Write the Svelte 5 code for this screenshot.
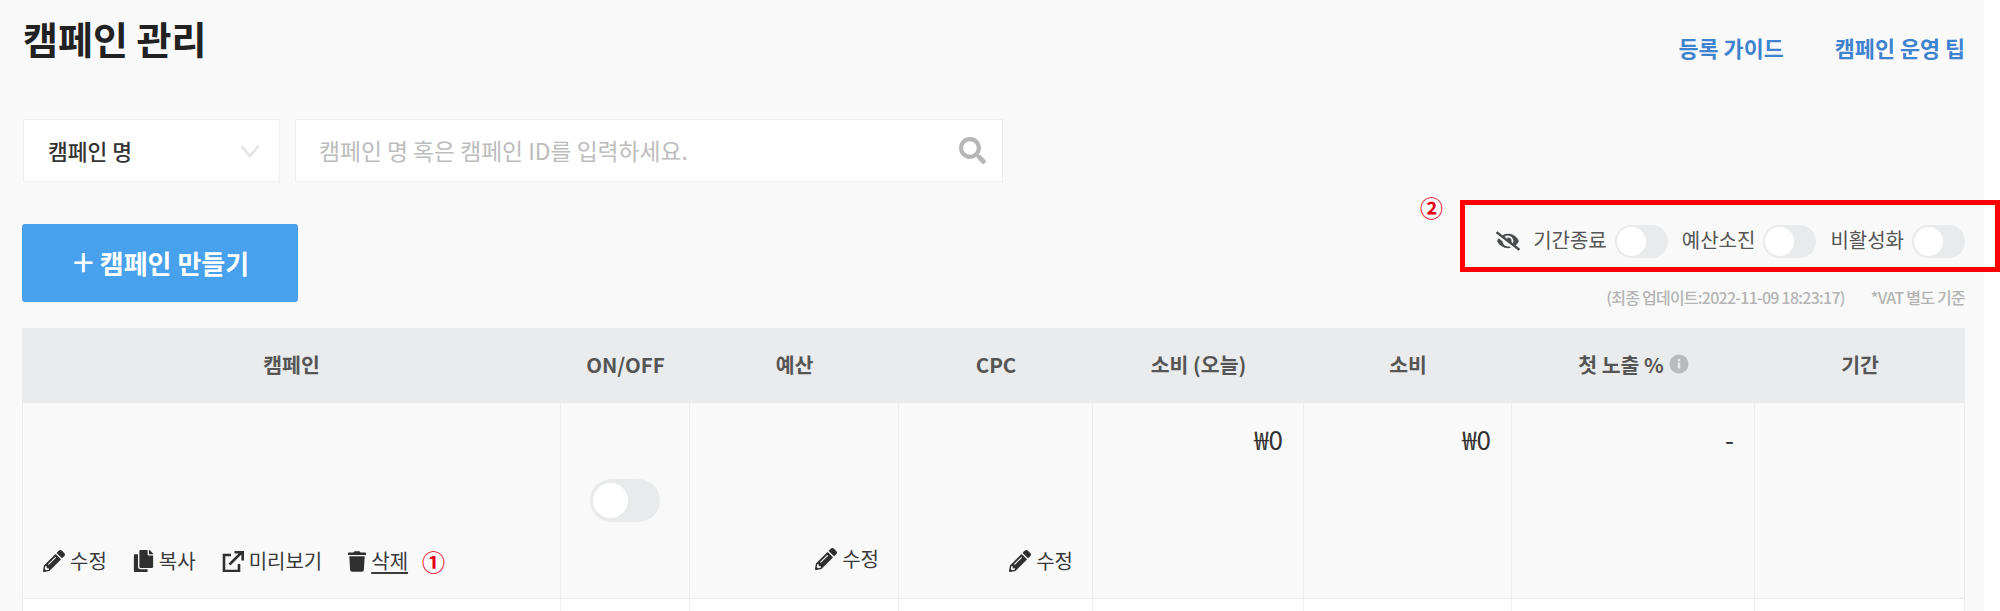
<script>
  const icons = {
    pencil: { vb: '0 0 512 512', d: 'M497.9 142.1l-46.1 46.1c-4.7 4.7-12.3 4.7-17 0l-111-111c-4.7-4.7-4.7-12.3 0-17l46.1-46.1c18.7-18.7 49.1-18.7 67.9 0l60.1 60.1c18.8 18.7 18.8 49.1 0 67.9zM284.2 99.8L21.6 362.4.4 483.9c-2.9 16.4 11.4 30.6 27.8 27.8l121.5-21.3 262.6-262.6c4.7-4.7 4.7-12.3 0-17l-111-111c-4.8-4.7-12.4-4.7-17.1 0zM124.1 339.9c-5.5-5.5-5.5-14.3 0-19.8l154-154c5.5-5.5 14.3-5.5 19.8 0s5.5 14.3 0 19.8l-154 154c-5.5 5.5-14.3 5.5-19.8 0zM88 424h48v36.3l-64.5 11.3-31.1-31.1L51.7 376H88v48z' },
    copy: { vb: '0 0 448 512', d: 'M320 448v40c0 13.255-10.745 24-24 24H24c-13.255 0-24-10.745-24-24V120c0-13.255 10.745-24 24-24h72v296c0 30.879 25.121 56 56 56h168zm0-344V0H152c-13.255 0-24 10.745-24 24v368c0 13.255 10.745 24 24 24h272c13.255 0 24-10.745 24-24V128H344c-13.2 0-24-10.8-24-24zm120.971-31.029L375.029 7.029A24 24 0 0 0 358.059 0H352v96h96v-6.059a24 24 0 0 0-7.029-16.97z' },
    trash: { vb: '0 0 448 512', d: 'M432 32H312l-9.4-18.7A24 24 0 0 0 281.1 0H166.8a23.72 23.72 0 0 0-21.4 13.3L136 32H16A16 16 0 0 0 0 48v32a16 16 0 0 0 16 16h416a16 16 0 0 0 16-16V48a16 16 0 0 0-16-16zM53.2 467a48 48 0 0 0 47.9 45h245.8a48 48 0 0 0 47.9-45L416 128H32z' }
  };
  const columns = [
    { label: '캠페인', width: 539 },
    { label: 'ON/OFF', width: 129 },
    { label: '예산', width: 209 },
    { label: 'CPC', width: 194 },
    { label: '소비 (오늘)', width: 211 },
    { label: '소비', width: 208 },
    { label: '첫 노출 %', width: 243, info: true },
    { label: '기간', width: 210 }
  ];
  const filters = ['기간종료', '예산소진', '비활성화'];
  const gridColumns = columns.map((c) => c.width + 'px').join(' ');
</script>

{#snippet icon(name, cls)}
  <svg class={cls} viewBox={icons[name].vb} aria-hidden="true"><path d={icons[name].d} fill="currentColor" /></svg>
{/snippet}

<div class="shot">
  <main class="page">
    <header class="top">
      <h1>캠페인 관리</h1>
      <nav>
        <a href="#guide">등록 가이드</a>
        <a href="#tip">캠페인 운영 팁</a>
      </nav>
    </header>

    <section class="search">
      <div class="select">
        <span>캠페인 명</span>
        <svg class="chev" viewBox="0 0 20 14" aria-hidden="true"><path d="M1.5 2 10 12 18.500 2" fill="none" stroke="#e4e4e4" stroke-width="2.500" /></svg>
      </div>
      <div class="input">
        <span>캠페인 명 혹은 캠페인 ID를 입력하세요.</span>
        <svg class="mag" viewBox="0 0 512 512" aria-hidden="true"><path fill="currentColor" d="M505 442.7L405.3 343c-4.5-4.5-10.6-7-17-7H372c27.6-35.3 44-79.7 44-128C416 93.1 322.9 0 208 0S0 93.1 0 208s93.1 208 208 208c48.3 0 92.7-16.4 128-44v16.3c0 6.4 2.5 12.5 7 17l99.700 99.700c9.400 9.400 24.600 9.400 33.900 0l28.300-28.300c9.400-9.400 9.400-24.600.1-34zM208 336c-70.700 0-128-57.200-128-128 0-70.700 57.200-128 128-128 70.700 0 128 57.200 128 128 0 70.700-57.200 128-128 128z" /></svg>
      </div>
    </section>

    <section class="bar">
      <button class="create"><span class="plus">+</span> 캠페인 만들기</button>
      <div class="side">
        <div class="filters">
          <svg class="eye" viewBox="0 0 640 512" aria-hidden="true"><path fill="currentColor" d="M320 400c-75.850 0-137.250-58.710-142.900-133.110L72.200 185.820c-13.790 17.300-26.480 35.590-36.720 55.590a32.350 32.350 0 0 0 0 29.190C89.710 376.410 197.070 448 320 448c26.910 0 52.870-4 77.890-10.460L346 397.390a144.130 144.130 0 0 1-26 2.610zm313.820 58.100l-110.550-85.440a331.250 331.250 0 0 0 81.250-102.070 32.350 32.350 0 0 0 0-29.190C550.290 135.590 442.930 64 320 64a308.150 308.150 0 0 0-147.320 37.700L45.460 3.370A16 16 0 0 0 23 6.180L3.370 31.450A16 16 0 0 0 6.180 53.900l588.360 454.730a16 16 0 0 0 22.460-2.810l19.640-25.270a16 16 0 0 0-2.820-22.450zm-183.720-142l-39.300-30.380A94.750 94.750 0 0 0 416 256a94.760 94.760 0 0 0-121.310-92.210A47.650 47.650 0 0 1 304 192a46.640 46.640 0 0 1-1.540 10l-73.610-56.890A142.310 142.310 0 0 1 320 112a143.920 143.920 0 0 1 144 144c0 21.630-5.290 41.790-13.900 60.110z" /></svg>
          {#each filters as f}
            <span class="flabel">{f}</span>
            <span class="switch small"><i></i></span>
          {/each}
        </div>
        <div class="meta">
          <span>(최종 업데이트:2022-11-09 18:23:17)</span>
          <span>*VAT 별도 기준</span>
        </div>
      </div>
    </section>

    <section class="table" style="grid-template-columns: {gridColumns}">
      {#each columns as c}
        <div class="th">
          {c.label}
          {#if c.info}
            <svg class="info" viewBox="0 0 20 20" aria-hidden="true"><circle cx="10" cy="10" r="9.500" fill="#b9bcbe" /><rect x="8.800" y="8.500" width="2.400" height="6" fill="#e9ebec" /><rect x="8.800" y="5" width="2.400" height="2.300" fill="#e9ebec" /></svg>
          {/if}
        </div>
      {/each}

      <div class="td first actions">
        <span class="act">{@render icon('pencil', 'ic pencil')}수정</span>
        <span class="act">{@render icon('copy', 'ic copy')}복사</span>
        <span class="act">
          <svg class="ic ext" viewBox="0 0 22 21" aria-hidden="true"><path d="M9 4H2v16h15v-7" fill="none" stroke="currentColor" stroke-width="2.600" /><path d="M7.500 13.500 19 2M12.500 1.300H20.700V9.500" fill="none" stroke="currentColor" stroke-width="2.600" /></svg>
          미리보기
        </span>
        <span class="act">{@render icon('trash', 'ic trash')}<u>삭제</u></span>
        <span class="mark">①</span>
      </div>
      <div class="td center"><span class="switch large"><i></i></span></div>
      <div class="td end edit up"><span class="act">{@render icon('pencil', 'ic pencil')}수정</span></div>
      <div class="td end edit"><span class="act">{@render icon('pencil', 'ic pencil')}수정</span></div>
      <div class="td num">₩0</div>
      <div class="td num">₩0</div>
      <div class="td num">-</div>
      <div class="td last"></div>

      {#each columns as c, i}
        <div class="td blank" class:first={i === 0} class:last={i === columns.length - 1}></div>
      {/each}
    </section>
  </main>

  <div class="callout" aria-hidden="true"></div>
  <span class="mark two">②</span>
</div>

<style>
  :global(body) {
    background: #fff;
    margin: 0;
  }
  .shot {
    position: relative;
    width: 2000px;
    height: 611px;
    overflow: hidden;
    font-family: "Noto Sans CJK KR", "Noto Sans", sans-serif;
    color: #333;
  }
  .page {
    box-sizing: border-box;
    width: 1984px;
    height: 611px;
    padding: 0 19px 0 22px;
    background: #f9f9f9;
    overflow: hidden;
  }
  .top {
    display: flex;
    justify-content: space-between;
    align-items: flex-start;
    height: 119px;
  }
  h1 {
    margin: 10px 0 0 1px;
    font-size: 38px;
    line-height: 56px;
    font-weight: 700;
    color: #222;
  }
  nav {
    display: flex;
    gap: 51px;
    margin-top: 32px;
  }
  nav a {
    color: #3d83cf;
    font-size: 21.800px;
    line-height: 32px;
    font-weight: 700;
    text-decoration: none;
  }
  .search {
    display: flex;
    gap: 15px;
    height: 63px;
    margin-left: 1px;
  }
  .select,
  .input {
    box-sizing: border-box;
    display: flex;
    align-items: center;
    justify-content: space-between;
    background: #fff;
    border: 1px solid #eeeeee;
    height: 63px;
  }
  .select {
    width: 257px;
    padding: 0 19px 0 24px;
    font-size: 21.500px;
    font-weight: 500;
    color: #333;
  }
  .chev {
    width: 20px;
    height: 14px;
  }
  .input {
    width: 708px;
    padding: 0 16px 0 23px;
    font-size: 22.800px;
    color: #bcbcbc;
  }
  .mag {
    width: 27px;
    height: 27px;
    color: #b6b6b6;
  }
  .bar {
    display: flex;
    justify-content: space-between;
    align-items: flex-start;
    height: 146px;
    padding-top: 42px;
    box-sizing: border-box;
  }
  .create {
    width: 276px;
    height: 78px;
    border: 0;
    border-radius: 3px;
    background: #47a1ec;
    color: #fff;
    font: inherit;
    font-size: 26px;
    font-weight: 700;
    padding: 0 0 0 2px;
    line-height: 72px;
  }
  .plus {
    font-size: 38px;
    font-weight: 400;
    line-height: 1;
    vertical-align: -3px;
  }
  .side {
    display: flex;
    flex-direction: column;
    align-items: flex-end;
  }
  .filters {
    display: flex;
    align-items: center;
    height: 34px;
  }
  .eye {
    width: 24px;
    height: 20px;
    margin-right: 13px;
    color: #4a4d4e;
  }
  .flabel {
    font-size: 20px;
    line-height: 30px;
    color: #555;
    margin-right: 8px;
    padding-bottom: 2px;
  }
  .switch {
    display: block;
    box-sizing: border-box;
    background: #e8eaeb;
    position: relative;
  }
  .switch i {
    display: block;
    background: #fff;
    border-radius: 50%;
  }
  .switch.small {
    width: 53px;
    height: 33px;
    border-radius: 17px;
    padding: 2px;
  }
  .switch.small:not(:last-child) {
    margin-right: 14px;
  }
  .switch.small i {
    width: 29px;
    height: 29px;
  }
  .switch.large {
    width: 70px;
    height: 43px;
    border-radius: 22px;
    padding: 4px 3px;
  }
  .switch.large i {
    width: 35px;
    height: 35px;
  }
  .meta {
    display: flex;
    gap: 26px;
    margin-top: 28px;
    font-size: 16px;
    line-height: 22px;
    letter-spacing: -0.75px;
    font-weight: 500;
    color: #b4b4b4;
  }
  .table {
    display: grid;
    grid-template-rows: 75px 196px 60px;
    width: 1943px;
  }
  .th {
    display: flex;
    align-items: center;
    justify-content: center;
    gap: 5px;
    background: #e9ebec;
    font-size: 20.500px;
    font-weight: 700;
    color: #555;
    padding-bottom: 4px;
  }
  .info {
    width: 20px;
    height: 20px;
  }
  .td {
    box-sizing: border-box;
    border-right: 1px solid #eeeeee;
    border-bottom: 1px solid #ebebeb;
    font-size: 20px;
    color: #333;
  }
  .first {
    border-left: 1px solid #eeeeee;
  }
  .blank {
    background: #fff;
  }
  .actions {
    display: flex;
    align-items: flex-end;
    gap: 26px;
    padding: 0 0 22px 20px;
  }
  .act {
    display: inline-flex;
    align-items: center;
    gap: 5px;
    font-size: 20px;
    line-height: 30px;
    color: #3a3a3a;
  }
  :global(.ic) {
    color: #2f2f2f;
    flex: none;
  }
  :global(.ic.pencil) {
    width: 22px;
    height: 22px;
  }
  :global(.ic.copy) {
    width: 21px;
    height: 22px;
  }
  .ext {
    width: 22px;
    height: 21px;
  }
  :global(.ic.trash) {
    width: 18px;
    height: 21px;
  }
  u {
    text-underline-offset: 3px;
  }
  .mark {
    color: #e60012;
    font-size: 23px;
    font-weight: 700;
    line-height: 30px;
    margin-left: -12px;
  }
  .two {
    position: absolute;
    left: 1420px;
    top: 192px;
    margin: 0;
  }
  .center {
    display: flex;
    align-items: flex-start;
    justify-content: center;
    padding-top: 76px;
  }
  .end {
    display: flex;
    align-items: flex-end;
    justify-content: flex-end;
    padding: 0 19px 22px 0;
  }
  .up {
    padding-bottom: 24px;
  }
  .num {
    text-align: right;
    padding: 19px 20px 0 0;
    font-size: 26px;
    line-height: 34px;
  }
  .callout {
    position: absolute;
    left: 1460px;
    top: 200px;
    width: 540px;
    height: 72px;
    box-sizing: border-box;
    border: 5px solid #fe0000;
  }
</style>
